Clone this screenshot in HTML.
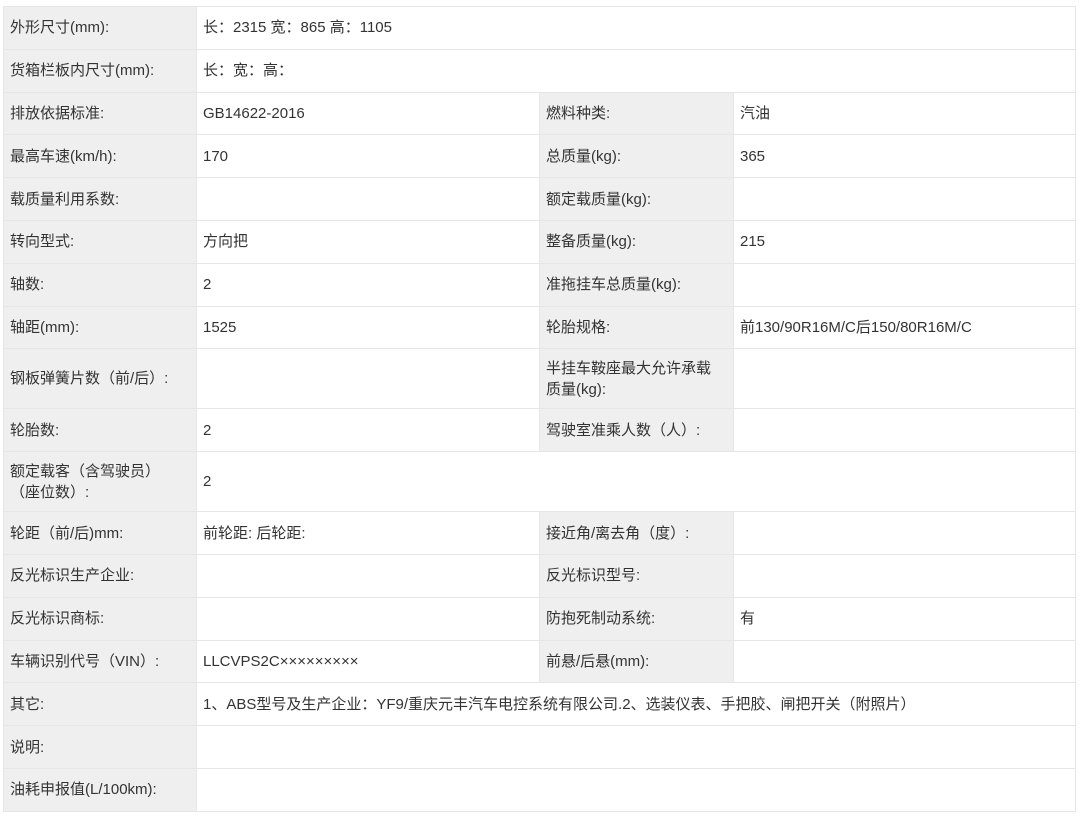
<!DOCTYPE html><html><head><meta charset="utf-8"><style>
body{margin:0;background:#fff;width:1080px;height:816px;overflow:hidden;font-family:"Liberation Sans","Noto Sans CJK SC",sans-serif;font-size:15px;color:#333}
table{position:absolute;left:3px;top:6px;width:1073px;border-collapse:collapse;table-layout:fixed}
td{border:1px solid #e6e6e6;padding:0 6px;height:41.8px;line-height:21px;vertical-align:middle;overflow:hidden;white-space:nowrap}
td.l{background:#efefef}
tr.t td{height:59px}
</style></head><body>
<table>
<colgroup><col style="width:193px"><col style="width:343px"><col style="width:194px"><col></colgroup>
<tr><td class="l">外形尺寸(mm):</td><td colspan="3">长：2315 宽：865 高：1105</td></tr>
<tr><td class="l">货箱栏板内尺寸(mm):</td><td colspan="3">长：宽：高：</td></tr>
<tr><td class="l">排放依据标准:</td><td>GB14622-2016</td><td class="l">燃料种类:</td><td>汽油</td></tr>
<tr><td class="l">最高车速(km/h):</td><td>170</td><td class="l">总质量(kg):</td><td>365</td></tr>
<tr><td class="l">载质量利用系数:</td><td></td><td class="l">额定载质量(kg):</td><td></td></tr>
<tr><td class="l">转向型式:</td><td>方向把</td><td class="l">整备质量(kg):</td><td>215</td></tr>
<tr><td class="l">轴数:</td><td>2</td><td class="l">准拖挂车总质量(kg):</td><td></td></tr>
<tr><td class="l">轴距(mm):</td><td>1525</td><td class="l">轮胎规格:</td><td>前130/90R16M/C后150/80R16M/C</td></tr>
<tr class="t"><td class="l">钢板弹簧片数（前/后）:</td><td></td><td class="l">半挂车鞍座最大允许承载<br>质量(kg):</td><td></td></tr>
<tr><td class="l">轮胎数:</td><td>2</td><td class="l">驾驶室准乘人数（人）:</td><td></td></tr>
<tr class="t"><td class="l">额定载客（含驾驶员）<br>（座位数）:</td><td colspan="3">2</td></tr>
<tr><td class="l">轮距（前/后)mm:</td><td>前轮距: 后轮距:</td><td class="l">接近角/离去角（度）:</td><td></td></tr>
<tr><td class="l">反光标识生产企业:</td><td></td><td class="l">反光标识型号:</td><td></td></tr>
<tr><td class="l">反光标识商标:</td><td></td><td class="l">防抱死制动系统:</td><td>有</td></tr>
<tr><td class="l">车辆识别代号（VIN）:</td><td>LLCVPS2C×××××××××</td><td class="l">前悬/后悬(mm):</td><td></td></tr>
<tr><td class="l">其它:</td><td colspan="3">1、ABS型号及生产企业：YF9/重庆元丰汽车电控系统有限公司.2、选装仪表、手把胶、闸把开关（附照片）</td></tr>
<tr><td class="l">说明:</td><td colspan="3"></td></tr>
<tr><td class="l">油耗申报值(L/100km):</td><td colspan="3"></td></tr>
</table>
</body></html>
